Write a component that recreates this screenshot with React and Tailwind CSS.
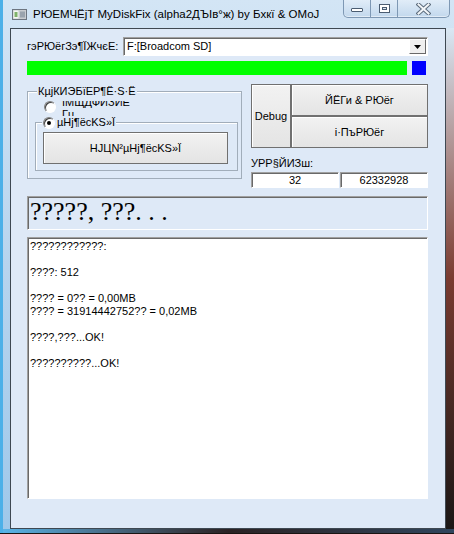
import React from 'react'

const sans = "font-['Liberation_Sans',Arial,sans-serif]"

const logLines = [
  '????????????:',
  '',
  '????: 512',
  '',
  '???? = 0?? = 0,00MB',
  '???? = 31914442752?? = 0,02MB',
  '',
  '????,???...OK!',
  '',
  '??????????...OK!',
]

const Button = ({ className = '', children }) => (
  <div
    className={`flex items-center justify-center border border-[#707070] bg-gradient-to-b from-[#f2f2f2] to-[#e4e4e4] shadow-[inset_1px_1px_0_#ffffff] text-[11px] text-black ${className}`}
  >
    {children}
  </div>
)

const Radio = ({ checked }) => (
  <span className="flex h-[12px] w-[12px] shrink-0 items-center justify-center rounded-full border border-t-[#808080] border-l-[#808080] border-r-white border-b-white bg-white shadow-[inset_1px_1px_0_#404040]">
    {checked ? <span className="h-[4px] w-[4px] rounded-full bg-black" /> : null}
  </span>
)

const Sunken = ({ className = '', children }) => (
  <div
    className={`border border-t-[#a0a0a0] border-l-[#a0a0a0] border-r-white border-b-white shadow-[inset_1px_1px_0_#696969] ${className}`}
  >
    {children}
  </div>
)

const AppIcon = () => (
  <svg width="15" height="11" viewBox="0 0 15 11" className="shrink-0">
    <rect x="0.5" y="0.5" width="14" height="10" fill="#c9ccd0" stroke="#6d7580" />
    <rect x="1.5" y="1.5" width="5" height="8" fill="#f4f7f2" />
    <rect x="2.5" y="3" width="3" height="5" fill="#7fb26a" />
    <rect x="8" y="2.5" width="5" height="6" fill="#9aa3ad" />
  </svg>
)

const CaptionButtons = () => (
  <div className="ml-auto mr-[4px] flex h-[18px] self-start overflow-hidden rounded-b-[5px] border border-t-0 border-[#7e98b4] bg-gradient-to-b from-[#e7f0f9]/70 to-[#bcd3ea]/70 shadow-[inset_0_-1px_0_#ffffff80]">
    <div className="flex w-[27px] items-center justify-center border-r border-[#7e98b4]">
      <span className="mt-[3px] h-[4px] w-[12px] rounded-[1px] border border-[#4b5d72] bg-white" />
    </div>
    <div className="flex w-[27px] items-center justify-center border-r border-[#7e98b4]">
      <span className="flex h-[9px] w-[11px] items-center justify-center border border-[#4b5d72] bg-white">
        <span className="h-[3px] w-[5px] border border-[#4b5d72] bg-[#dce7f2]" />
      </span>
    </div>
    <div className="flex w-[51px] items-center justify-center">
      <svg width="15" height="12" viewBox="0 0 15 12">
        <path d="M2.5 1.5 L12.5 10.5 M12.5 1.5 L2.5 10.5" stroke="#5d6d7e" strokeWidth="4" strokeLinecap="square" />
        <path d="M2.5 1.5 L12.5 10.5 M12.5 1.5 L2.5 10.5" stroke="#f2f5f8" strokeWidth="2" strokeLinecap="square" />
      </svg>
    </div>
  </div>
)

export default function App() {
  return (
    <div className={`h-[534px] w-[454px] overflow-hidden bg-[#1a1412] ${sans}`}>
      <div className="flex h-[533px] w-[454px] flex-col border-l-[3px] border-l-[#4cb0e8] bg-gradient-to-b from-[#d3e5f5] via-[#b7d4ee] to-[#9ec8ea]">
        {/* title bar */}
        <div className="flex h-[28px] shrink-0 items-start">
          <div className="ml-[9px] mt-[8px] flex items-center gap-[6px]">
            <AppIcon />
            <span className="text-[11.5px] leading-[12px] text-black">
              РЮЕМЧЁјТ MyDiskFix (alpha2ДЪІв°ж) by Бхкї &amp; ОМоЈ
            </span>
          </div>
          <CaptionButtons />
        </div>

        <div className="flex flex-1">
          <div className="w-[7px] shrink-0" />

          {/* client area */}
          <div className="h-[501px] w-[436px] shrink-0 border border-[#3e4852] bg-[#dee9f7] pl-[16px] pr-[17px] pt-[8px] text-[11px] text-black">
            <div className="flex h-[19px] items-center">
              <span className="w-[96px] shrink-0 leading-[13px]">гэРЮёгЗэ¶ЇЖчєЕ:</span>
              <Sunken className="flex h-[19px] flex-1 items-center bg-white pl-[3px] pr-[1px]">
                <span className="flex-1 text-[11px] leading-[13px]">F:[Broadcom SD]</span>
                <div className="flex h-[15px] w-[17px] items-center justify-center border border-t-white border-l-white border-r-[#696969] border-b-[#696969] bg-[#efefef]">
                  <svg width="7" height="4" viewBox="0 0 7 4">
                    <path d="M0 0 H7 L3.5 4 Z" fill="#000" />
                  </svg>
                </div>
              </Sunken>
            </div>

            <div className="mt-[5px] flex h-[14px] gap-[5px]">
              <div className="w-[380px] bg-[#00ff00]" />
              <div className="w-[14px] bg-[#0000ff]" />
            </div>

            <div className="mt-[9px] flex h-[104px] items-start gap-[9px]">
              <fieldset className="w-[215px] shrink-0 border border-[#a1adba] pb-[7px] shadow-[inset_1px_1px_0_#ffffff]">
                <legend className="ml-[9px] bg-[#dee9f7] px-[1px] leading-[14px]">КµјКИЭБїЕР¶Ё·S·Ё</legend>
                <div className="flex h-[18px] items-center pl-[16px]">
                  <Radio />
                  <div className="ml-[6px] mt-[2px] flex h-[15px] flex-col justify-center overflow-hidden leading-[12px]">
                    <span>ІМЩДФИЗИЕ</span>
                    <span>Гu</span>
                  </div>
                </div>
                <fieldset className="ml-[7px] w-[203px] border border-[#a1adba] pb-[6px] shadow-[inset_1px_1px_0_#ffffff]">
                  <legend className="ml-[6px] flex items-center bg-[#dee9f7] px-[1px] leading-[13px]">
                    <Radio checked />
                    <span className="ml-[2px]">µНј¶ёсKS»Ї</span>
                  </legend>
                  <Button className="ml-[7px] mt-[3px] h-[32px] w-[185px]">НЈЦN²µНј¶ёсKS»Ї</Button>
                </fieldset>
              </fieldset>

              <div className="flex flex-1 flex-col">
                <div className="flex h-[64px]">
                  <Button className="h-[64px] w-[40px]">Debug</Button>
                  <div className="flex flex-1 flex-col">
                    <Button className="h-[32px]">ЙЁГи &amp; РЮёг</Button>
                    <Button className="h-[32px]">і·ПъРЮёг</Button>
                  </div>
                </div>
                <span className="mt-[8px] h-[14px] leading-[14px]">УРР§ЙИЗш:</span>
                <div className="mt-[2px] flex h-[16px] gap-[1px]">
                  <Sunken className="flex w-[88px] items-center justify-center bg-white leading-[13px]">32</Sunken>
                  <Sunken className="flex flex-1 items-center justify-center bg-white leading-[13px]">62332928</Sunken>
                </div>
              </div>
            </div>

            <Sunken className="mt-[8px] h-[34px] pl-[2px]">
              <span className="block font-['Liberation_Serif','Times_New_Roman',serif] text-[26px] leading-[30px] text-black">
                ?????, ???. . .
              </span>
            </Sunken>

            <Sunken className="mt-[7px] h-[262px] bg-white pl-[2px] pt-[2px]">
              {logLines.map((line, i) => (
                <div key={i} className="h-[13px] whitespace-pre leading-[13px]">
                  {line}
                </div>
              ))}
            </Sunken>
          </div>

          <div className="flex-1 bg-gradient-to-b from-[#d9e8f5] via-[#7a3b30] to-[#1b1716]" />
        </div>

        <div className="h-[4px] shrink-0 bg-gradient-to-r from-[#58b4e8] via-[#2a2224] to-[#30465e]" />
      </div>
    </div>
  )
}
